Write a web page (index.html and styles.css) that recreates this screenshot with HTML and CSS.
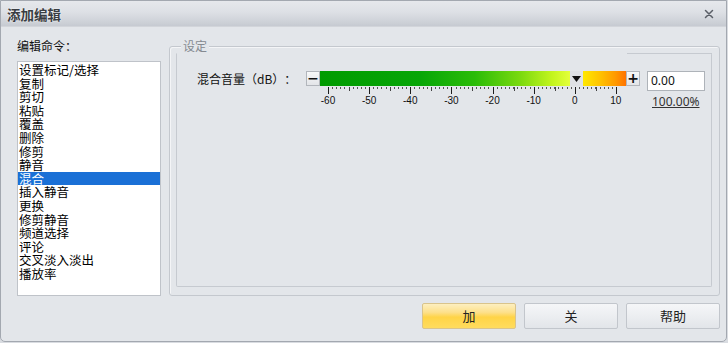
FILE: index.html
```html
<!DOCTYPE html>
<html lang="zh-CN">
<head>
<meta charset="utf-8">
<title>添加编辑</title>
<link rel="stylesheet" href="styles.css">
</head>
<body>
<div class="window">
  <div class="titlebar">
    <span class="title">添加编辑</span>
    <svg class="close" width="10" height="10" viewBox="0 0 10 10"><path d="M1.5 1.5L8.5 8.5M8.5 1.5L1.5 8.5" stroke="#5a5f67" stroke-width="1.5" stroke-linecap="round"/></svg>
  </div>
  <div class="main">
    <div class="left">
      <div class="cmd-label">编辑命令：</div>
      <ul class="list">
        <li>设置标记/选择</li>
        <li>复制</li>
        <li>剪切</li>
        <li>粘贴</li>
        <li>覆盖</li>
        <li>删除</li>
        <li>修剪</li>
        <li>静音</li>
        <li class="sel">混合</li>
        <li>插入静音</li>
        <li>更换</li>
        <li>修剪静音</li>
        <li>频道选择</li>
        <li>评论</li>
        <li>交叉淡入淡出</li>
        <li>播放率</li>
      </ul>
    </div>
    <div class="group">
      <span class="legend">设定</span>
      <div class="inner">
        <div class="row">
          <div class="vol-label">混合音量（dB）：</div>
          <div class="slider">
            <div class="bar">
              <span class="sbtn">−</span>
              <span class="green"></span>
              <span class="marker"><svg width="9" height="6" viewBox="0 0 9 6"><path d="M0 0H9L4.5 6Z" fill="#111"/></svg></span>
              <span class="orange"></span>
              <span class="sbtn">+</span>
            </div>
            <div class="ticks"></div>
            <div class="scale">
              <span>-60</span><span>-50</span><span>-40</span><span>-30</span><span>-20</span><span>-10</span><span>0</span><span>10</span>
            </div>
          </div>
          <div class="valcol">
            <div class="input">0.00</div>
            <div class="pct">100.00%</div>
          </div>
        </div>
      </div>
    </div>
  </div>
  <div class="footer">
    <button class="btn primary">加</button>
    <button class="btn">关</button>
    <button class="btn">帮助</button>
  </div>
</div>
</body>
</html>
```
FILE: styles.css
```css
* { box-sizing: border-box; }
html, body { margin: 0; padding: 0; }
body {
  width: 728px;
  height: 343px;
  overflow: hidden;
  font-family: "Noto Sans CJK SC", "Noto Sans", sans-serif;
  text-spacing-trim: space-all;
  background: #d9dce1;
}
.window {
  width: 727px;
  height: 342px;
  border: 1px solid #a3a8b0;
  border-radius: 0 0 5px 5px;
  background: #e3e6ea;
  display: flex;
  flex-direction: column;
  overflow: hidden;
}
.titlebar {
  height: 26px;
  flex: none;
  display: flex;
  align-items: center;
  justify-content: space-between;
  padding: 0 12px 0 6px;
  background: linear-gradient(#e6e8ec 0%, #dde0e5 45%, #cdd1d7 85%, #c6cad1 100%);
  border-bottom: 1px solid #d2d5da;
}
.title {
  font-size: 13.5px;
  font-weight: bold;
  color: #3a3d42;
  text-shadow: 0 0 2px #fff;
  line-height: 16px;
}
.close { display: block; }
.main {
  display: flex;
  gap: 8px;
  padding: 0 0 0 16px;
}
.left {
  width: 144px;
  padding-top: 11px;
  display: flex;
  flex-direction: column;
}
.cmd-label {
  font-size: 12px;
  line-height: 16px;
  color: #111;
  height: 16px;
}
.list {
  list-style: none;
  margin: 7px 0 0;
  padding: 1px 0 0;
  height: 235px;
  background: #fff;
  border: 1px solid #bfc3c9;
}
.list li {
  font-size: 12.5px;
  line-height: 13.6px;
  height: 13.6px;
  padding-left: 1px;
  color: #000;
  white-space: nowrap;
}
.list li.sel {
  background: #1a70d6;
  color: #fff;
}
.group {
  position: relative;
  margin-top: 19px;
  width: 551px;
  height: 250px;
  border: 1px solid #c4c8ce;
  border-radius: 3px;
  box-shadow: inset 1px 1px 0 #f4f5f7;
  padding: 6px 7px 8px 6px;
}
.legend {
  position: absolute;
  top: -9px;
  left: 11px;
  padding: 0 2px;
  background: #e3e6ea;
  font-size: 12px;
  line-height: 16px;
  color: #858a91;
}
.inner {
  position: relative;
  height: 234px;
  border: 1px solid #c6cad0;
  border-top-color: transparent;
  border-radius: 0 2px 2px 2px;
  padding: 17px 0 0 20px;
}
.inner::before {
  content: "";
  position: absolute;
  top: -1px;
  right: -1px;
  width: 85px;
  height: 0;
  border-top: 1px solid #c6cad0;
}
.row {
  display: flex;
  align-items: flex-start;
}
.vol-label {
  width: 109px;
  font-size: 12px;
  line-height: 15px;
  color: #111;
  white-space: nowrap;
}
.slider {
  width: 334px;
}
.bar {
  display: flex;
  height: 15px;
}
.sbtn {
  width: 14px;
  height: 15px;
  border: 1px solid #b2b6bc;
  background: linear-gradient(#f7f8f9, #e3e5e8);
  font-size: 14px;
  font-weight: bold;
  line-height: 12px;
  text-align: center;
  color: #111;
  font-family: "DejaVu Sans", sans-serif;
}
.green {
  width: 250px;
  background: linear-gradient(to right, #009b00 0%, #07a607 40%, #2bbc08 62%, #7ad90f 80%, #c4f51e 93%, #e4ff3a 100%);
}
.marker {
  width: 13px;
  background: #dfe1e5;
  display: flex;
  justify-content: center;
  padding-top: 5px;
}
.marker svg { display: block; }
.orange {
  width: 43px;
  background: linear-gradient(to right, #ffe800 0%, #ffc200 40%, #ff9a00 75%, #ff7300 100%);
}
.ticks {
  margin: 1px 0 0 22px;
  width: 289px;
  height: 7px;
  background:
    repeating-linear-gradient(to right, #1e1e1e 0 1px, transparent 1px 41.14px) 0 0 / 100% 7px no-repeat,
    repeating-linear-gradient(to right, #444 0 1px, transparent 1px 41.14px) 20.57px 0 / 100% 4px no-repeat,
    repeating-linear-gradient(to right, #555 0 1px, transparent 1px 4.114px) 0 0 / 100% 2px no-repeat;
}
.scale {
  display: flex;
  padding-left: 1.43px;
  margin-top: 1px;
}
.scale span {
  width: 41.14px;
  flex: none;
  text-align: center;
  font-size: 10px;
  line-height: 12px;
  color: #111;
  font-family: "Liberation Sans", sans-serif;
}
.valcol {
  margin-left: 7px;
}
.input {
  width: 58px;
  height: 20px;
  background: #fff;
  border: 1px solid #aeb3b9;
  font-size: 12px;
  line-height: 18px;
  padding-left: 3px;
  color: #111;
  font-family: "Noto Sans", sans-serif;
}
.pct {
  margin-top: 4px;
  padding-left: 5px;
  font-size: 12px;
  line-height: 14px;
  color: #333;
  text-decoration: underline;
  font-family: "Noto Sans", sans-serif;
}
.footer {
  display: flex;
  justify-content: flex-end;
  gap: 8px;
  padding: 7px 6px 0 0;
}
.btn {
  width: 94px;
  height: 26px;
  margin: 0;
  border: 1px solid #c2c6cc;
  border-radius: 2px;
  background: linear-gradient(#f5f6f8 0%, #eceef1 50%, #e2e5e9 100%);
  font-family: "Noto Sans CJK SC", sans-serif;
  font-size: 13px;
  color: #222;
  padding: 0;
  line-height: 24px;
}
.btn.primary {
  border-color: #d9c48c;
  background: linear-gradient(#fdefc0 0%, #fde08a 35%, #ffd447 55%, #ffdc5e 100%);
}
```
